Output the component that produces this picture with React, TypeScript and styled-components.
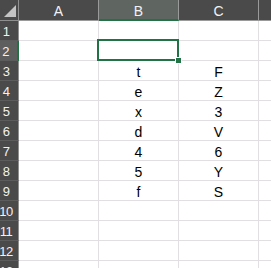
import React from 'react';
import styled, { createGlobalStyle, css } from 'styled-components';

const GREEN = '#217346';
const GRID = '#e1dfe1';
const HEADER_BG = '#4a4a4a';
const HEADER_SEL = '#5f6561';

const GlobalStyle = createGlobalStyle`
  html, body {
    margin: 0;
    padding: 0;
    background: #fff;
    overflow: hidden;
  }
`;

// Feuille entière - grille de cellules
const Sheet = styled.div`
  display: grid;
  grid-template-columns: 19px repeat(4, 80px);
  grid-template-rows: 21px;
  grid-auto-rows: 20px;
  width: 271px;
  height: 268px;
  overflow: hidden;
  font-family: 'Liberation Sans', Arial, sans-serif;
`;

const Corner = styled.div`
  position: relative;
  background: ${HEADER_BG};
  border-right: 1px solid #8f8f8f;
  border-bottom: 1px solid #8f8f8f;
  box-sizing: border-box;

  &::after {
    content: '';
    position: absolute;
    right: 2px;
    bottom: 3px;
    width: 0;
    height: 0;
    border-left: 12px solid transparent;
    border-bottom: 12px solid #c4c4c4;
  }
`;

const ColHeader = styled.div<{ $selected?: boolean }>`
  display: flex;
  align-items: center;
  justify-content: center;
  padding-top: 2px;
  box-sizing: border-box;
  background: ${HEADER_BG};
  color: #f2f2f2;
  font-size: 14px;
  border-right: 1px solid #9a9a9a;
  border-bottom: 1px solid #9a9a9a;

  ${(p) =>
    p.$selected &&
    css`
      background: ${HEADER_SEL};
      border-bottom: 2px solid ${GREEN};
      padding-top: 3px;
    `}
`;

const RowHeader = styled.div<{ $selected?: boolean }>`
  display: flex;
  align-items: center;
  justify-content: center;
  padding-right: 6px;
  padding-top: 2px;
  box-sizing: border-box;
  background: ${HEADER_BG};
  color: #f2f2f2;
  font-size: 13px;
  letter-spacing: -0.5px;
  border-right: 1px solid #8f8f8f;
  border-bottom: 1px solid #5c5c5c;

  ${(p) =>
    p.$selected &&
    css`
      background: #5e5e5e;
      border-right: 2px solid ${GREEN};
    `}
`;

const Cell = styled.div<{ $selected?: boolean }>`
  position: relative;
  display: flex;
  align-items: center;
  justify-content: center;
  padding-top: 3px;
  box-sizing: border-box;
  background: #fff;
  color: #000;
  font-size: 14px;
  border-right: 1px solid ${GRID};
  border-bottom: 1px solid ${GRID};

  ${(p) =>
    p.$selected &&
    css`
      &::before {
        content: '';
        position: absolute;
        top: -2px;
        left: -2px;
        right: -1px;
        bottom: -1px;
        border: 2px solid ${GREEN};
        z-index: 1;
      }
      &::after {
        content: '';
        position: absolute;
        right: -4px;
        bottom: -4px;
        width: 5px;
        height: 5px;
        background: ${GREEN};
        border: 1px solid #fff;
        z-index: 2;
      }
    `}
`;

// la colonne D est coupée par le bord : son en-tête reste vide à l'écran
const columns = ['A', 'B', 'C', ''];
const colB = ['', '', 't', 'e', 'x', 'd', '4', '5', 'f'];
const colC = ['', '', 'F', 'Z', '3', 'V', '6', 'Y', 'S'];
const ROWS = 13;

export default function App() {
  return (
    <>
      <GlobalStyle />
      <Sheet>
        <Corner />
        {columns.map((c, i) => (
          <ColHeader key={i} $selected={c === 'B'}>
            {c}
          </ColHeader>
        ))}
        {Array.from({ length: ROWS }, (_, i) => {
          const row = i + 1;
          return (
            <React.Fragment key={row}>
              <RowHeader $selected={row === 2}>{row}</RowHeader>
              <Cell />
              <Cell $selected={row === 2}>{colB[i] ?? ''}</Cell>
              <Cell>{colC[i] ?? ''}</Cell>
              <Cell />
            </React.Fragment>
          );
        })}
      </Sheet>
    </>
  );
}
